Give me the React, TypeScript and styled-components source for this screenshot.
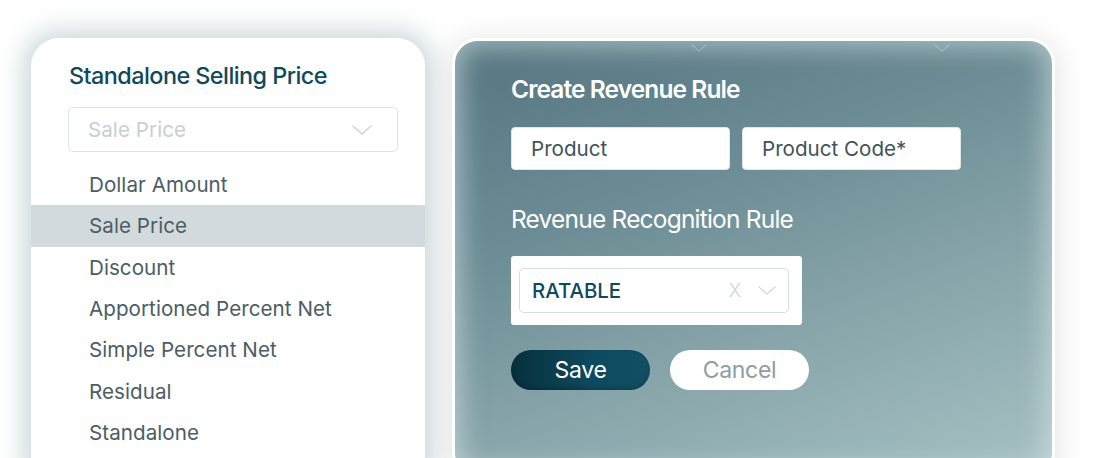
import React, { useState } from 'react';
import styled, { createGlobalStyle } from 'styled-components';

const GlobalStyle = createGlobalStyle`
    html, body {
        margin: 0;
        padding: 0;
        background: #ffffff;
    }
    * {
        box-sizing: border-box;
        font-family: Inter, 'Liberation Sans', sans-serif;
    }
`;

const pricingOptions = [
    'Dollar Amount',
    'Sale Price',
    'Discount',
    'Apportioned Percent Net',
    'Simple Percent Net',
    'Residual',
    'Standalone',
];

const Chevron: React.FC<{ color: string; size?: number }> = ({ color, size = 20 }) => (
    <svg width={size} height={size / 2} viewBox="0 0 20 10" fill="none">
        <path d="M1 1L10 9L19 1" stroke={color} strokeWidth="1.3" strokeLinecap="round" strokeLinejoin="round" />
    </svg>
);

const App: React.FC = () => {
    const [selected, setSelected] = useState(1);

    return (
        <>
            <GlobalStyle />
            <Page>
                <PriceCard>
                    <CardTitle>Standalone Selling Price</CardTitle>
                    <PriceSelect>
                        <Placeholder>Sale Price</Placeholder>
                        <Chevron color="#c9d2d6" />
                    </PriceSelect>
                    <OptionList>
                        {pricingOptions.map((each, i) =>
                            <OptionRow key={each} active={i === selected} onClick={() => setSelected(i)}>
                                {each}
                            </OptionRow>
                        )}
                    </OptionList>
                </PriceCard>

                <RulePanel>
                    <TopMark left={236}><Chevron color="rgba(255,255,255,0.3)" size={16} /></TopMark>
                    <TopMark left={479}><Chevron color="rgba(255,255,255,0.3)" size={16} /></TopMark>
                    <PanelTitle>Create Revenue Rule</PanelTitle>
                    <FieldRow>
                        <Field>Product</Field>
                        <Field>Product Code*</Field>
                    </FieldRow>
                    <SectionTitle>Revenue Recognition Rule</SectionTitle>
                    <RuleBox>
                        <RuleSelect>
                            <RuleValue>RATABLE</RuleValue>
                            <SelectIcons>
                                <ClearMark>X</ClearMark>
                                <Chevron color="#c9d3d6" size={18} />
                            </SelectIcons>
                        </RuleSelect>
                    </RuleBox>
                    <ButtonRow>
                        <PillButton primary>Save</PillButton>
                        <PillButton>Cancel</PillButton>
                    </ButtonRow>
                </RulePanel>
            </Page>
        </>
    );
}

const Page = styled.div`
    display: flex;
    align-items: flex-start;
    gap: 27px;
    height: 458px;
    padding: 38px 0 0 31px;
    overflow: hidden;
`;

const PriceCard = styled.div`
    width: 394px;
    height: 450px;
    flex-shrink: 0;
    background: #ffffff;
    border-radius: 28px;
    padding-top: 24px;
    box-shadow: 0 0 24px 8px rgba(90, 130, 140, 0.3);
    display: flex;
    flex-direction: column;
`;

const CardTitle = styled.div`
    margin-left: 38px;
    font-size: 23.4px;
    line-height: 28px;
    font-weight: 500;
    letter-spacing: -0.55px;
    color: #0f4a5c;
`;

const PriceSelect = styled.div`
    margin: 17px 27px 12px 37px;
    height: 45px;
    border: 1.5px solid #dde3e6;
    border-radius: 5px;
    display: flex;
    align-items: center;
    justify-content: space-between;
    padding: 0 25px 0 19px;
`;

const Placeholder = styled.span`
    font-size: 20.5px;
    letter-spacing: 0.1px;
    color: #c6cfd3;
`;

const OptionList = styled.div`
    display: flex;
    flex-direction: column;
`;

const OptionRow = styled.div<{ active: boolean }>`
    height: 41.3px;
    display: flex;
    align-items: center;
    padding-left: 58px;
    font-size: 20.6px;
    letter-spacing: 0.05px;
    color: #4b5d64;
    background: ${({ active }) => active ? '#d3dadd' : 'transparent'};
    cursor: pointer;
`;

const RulePanel = styled.div`
    position: relative;
    width: 603px;
    height: 440px;
    flex-shrink: 0;
    border: 3px solid #ffffff;
    border-radius: 26px;
    padding: 34px 0 0 56px;
    background: linear-gradient(160deg, #547580 0%, #6c8d95 35%, #89a6ab 65%, #a6c2c4 100%);
    box-shadow:
        inset 0 0 26px 6px rgba(225, 238, 240, 0.55),
        0 4px 28px 6px rgba(0, 0, 0, 0.09);
`;

const TopMark = styled.div<{ left: number }>`
    position: absolute;
    top: 3px;
    left: ${({ left }) => left}px;
    display: flex;
`;

const PanelTitle = styled.div`
    font-size: 24.5px;
    line-height: 28px;
    font-weight: 600;
    letter-spacing: -0.9px;
    color: #ffffff;
`;

const FieldRow = styled.div`
    display: flex;
    gap: 12px;
    margin-top: 24px;
`;

const Field = styled.div`
    width: 219px;
    height: 43px;
    background: #ffffff;
    border: 1px solid #e1e7e9;
    border-radius: 4px;
    display: flex;
    align-items: center;
    padding-left: 19px;
    font-size: 20.6px;
    color: #3f5359;
`;

const SectionTitle = styled.div`
    margin-top: 35px;
    font-size: 24.5px;
    line-height: 28px;
    font-weight: 400;
    letter-spacing: -0.8px;
    color: #ffffff;
`;

const RuleBox = styled.div`
    margin-top: 23px;
    width: 291px;
    padding: 12px 13px 12px 8px;
    background: #ffffff;
    border-radius: 3px;
`;

const RuleSelect = styled.div`
    height: 45px;
    border: 1.5px solid #d5dde0;
    border-radius: 5px;
    display: flex;
    align-items: center;
    justify-content: space-between;
    padding: 0 12px 0 12px;
`;

const RuleValue = styled.span`
    font-size: 20.4px;
    font-weight: 500;
    color: #0f4a5c;
`;

const SelectIcons = styled.div`
    display: flex;
    align-items: center;
    gap: 17px;
`;

const ClearMark = styled.span`
    font-size: 18px;
    font-weight: 300;
    color: #c9d3d6;
    line-height: 1;
`;

const ButtonRow = styled.div`
    display: flex;
    gap: 20px;
    margin-top: 25px;
`;

const PillButton = styled.button<{ primary?: boolean }>`
    width: 139px;
    height: 40px;
    border: none;
    border-radius: 20px;
    font-size: 23px;
    letter-spacing: -0.3px;
    cursor: pointer;
    color: ${({ primary }) => primary ? '#ffffff' : '#8d9da4'};
    background: ${({ primary }) => primary
        ? 'linear-gradient(90deg, #07303d 0%, #0e4a5e 60%, #124f63 100%)'
        : '#ffffff'};
    box-shadow: ${({ primary }) => primary ? 'inset 0 -2px 4px rgba(0,0,0,0.2)' : 'none'};
`;

export default App;
